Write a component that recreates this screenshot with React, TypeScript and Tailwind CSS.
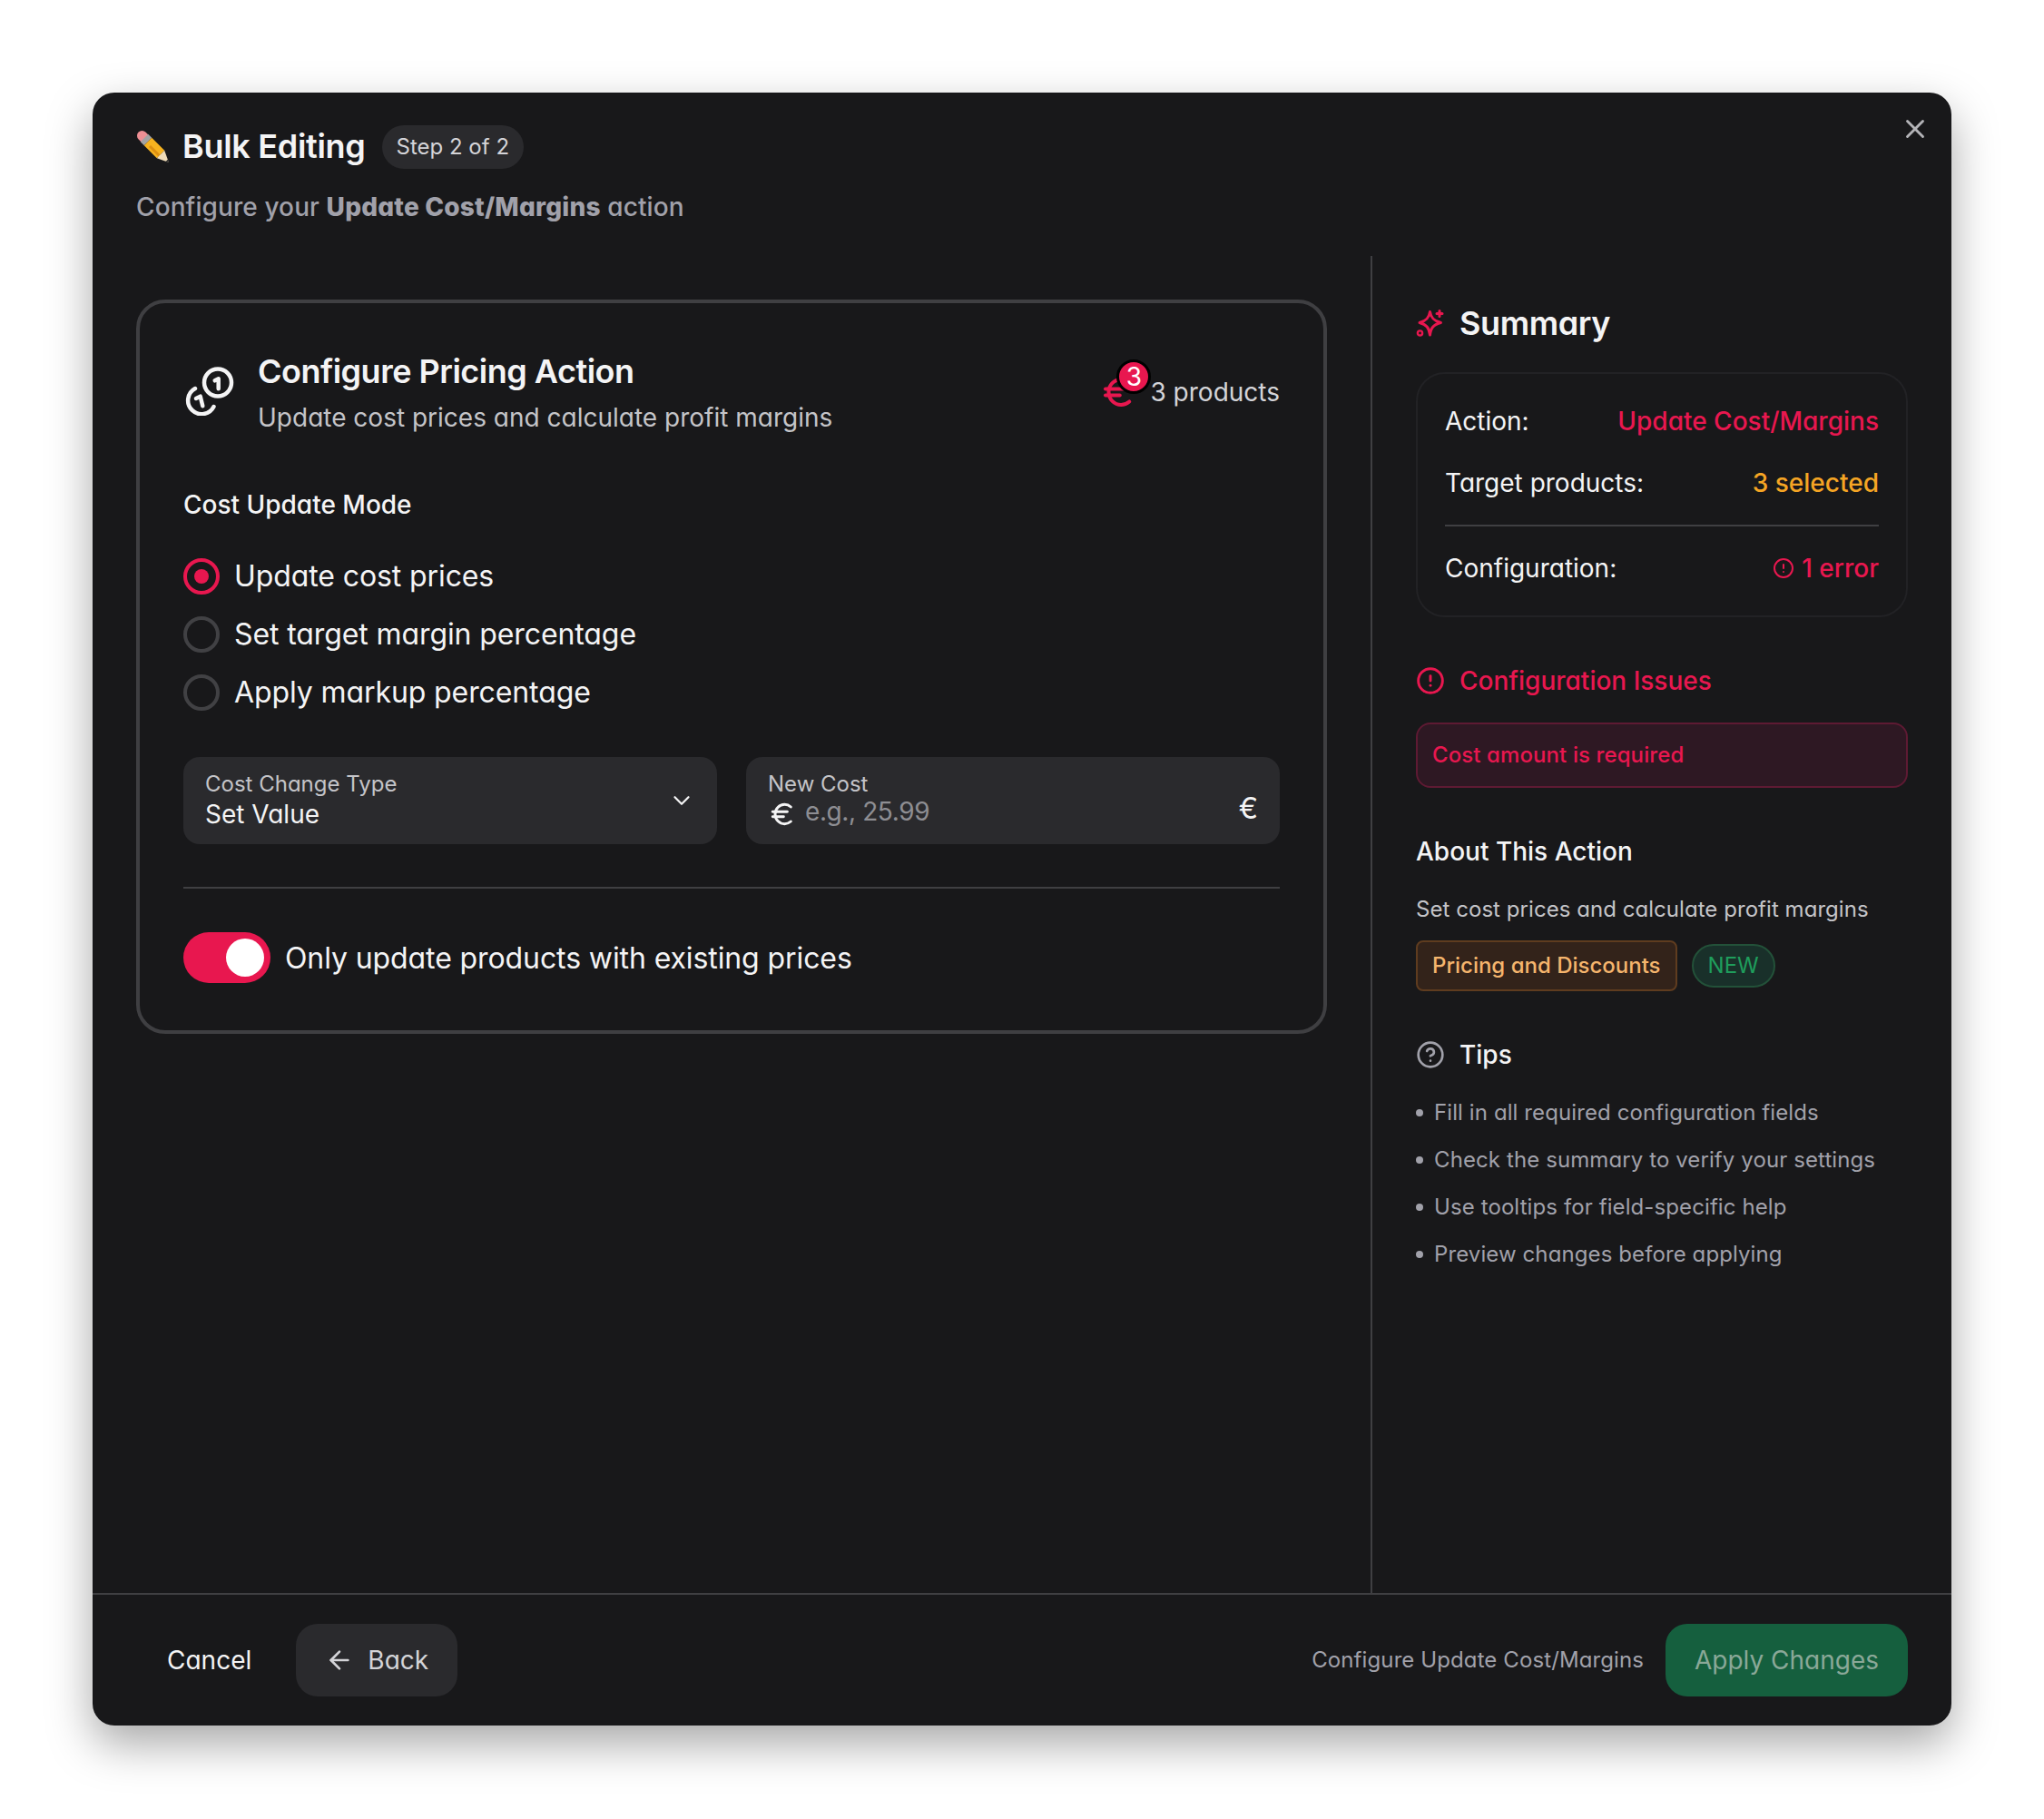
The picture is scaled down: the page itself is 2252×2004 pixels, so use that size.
import React from "react";
import { X, ChevronDown, ArrowLeft, Euro, CircleAlert, CircleHelp } from "lucide-react";

const Coins = () => (
  <svg width="60" height="60" viewBox="12 8 60 60" fill="none" stroke="#f4f4f5" strokeWidth="4.500" strokeLinecap="round" strokeLinejoin="round">
    <circle cx="50" cy="31.500" r="15" />
    <path d="M46.700 29.300l4-2v11" />
    <path d="M25 38a15 15 0 1 0 20.500 20" />
    <path d="M26 49l4.700-2.300 2.600 10.600" />
  </svg>
);

const Sparkle = () => (
  <svg width="32" height="32" viewBox="0 0 32 32" fill="none" stroke="#e8174f" strokeWidth="3" strokeLinecap="round" strokeLinejoin="round">
    <path d="M15.500 3.500C16.500 10 19.500 13.500 27.500 15.500 19.500 17.500 16.500 21 15.500 29 14.500 21 11.500 17.500 4 15.500 11.500 13.500 14.500 10 15.500 3.500Z" />
    <path d="M26 2.500v6M23 5.500h6" />
    <circle cx="4.500" cy="27" r="2.600" strokeWidth="2.400" />
  </svg>
);

const Pencil = () => (
  <svg width="38" height="38" viewBox="0 0 38 38" fill="none">
    <line x1="6.500" y1="6.500" x2="9" y2="9" stroke="#ee8f94" strokeWidth="11" strokeLinecap="round" />
    <line x1="9" y1="9" x2="13" y2="13" stroke="#a3a3a3" strokeWidth="12" />
    <line x1="13" y1="13" x2="27" y2="27" stroke="#f6b21f" strokeWidth="12" />
    <line x1="15" y1="18" x2="26" y2="29" stroke="#dc8f12" strokeWidth="3" />
    <path d="M22.800 31.200L31.200 22.800 36 36z" fill="#f0dcb8" />
    <path d="M32.500 35.100L35.100 32.500 36 36z" fill="#2b2b2b" />
  </svg>
);

const Radio = ({ on, label }: { on?: boolean; label: string }) => (
  <div className="flex items-center h-[40px] gap-[16px]">
    <div className={`w-[40px] h-[40px] rounded-full border-[4px] flex items-center justify-center ${on ? "border-[#e8174f]" : "border-[#414144]"}`}>
      {on && <div className="w-[16px] h-[16px] rounded-full bg-[#e8174f]" />}
    </div>
    <span className="text-[32px] tracking-[-0.1px] leading-[40px] text-[#f4f4f5]">{label}</span>
  </div>
);

const Row = ({ label, children }: { label: string; children: React.ReactNode }) => (
  <div className="flex items-center justify-between h-[40px]">
    <span className="text-[28px] text-[#f4f4f5]">{label}</span>
    {children}
  </div>
);

const tips = [
  "Fill in all required configuration fields",
  "Check the summary to verify your settings",
  "Use tooltips for field-specific help",
  "Preview changes before applying",
];

export default function App() {
  return (
    <div className="bg-white w-[2252px] h-[2004px] pt-[102px] pl-[102px] [font-family:Inter,'Noto_Sans',sans-serif] [font-feature-settings:'cv11']">
      <div className="relative w-[2048px] h-[1799px] rounded-[24px] bg-[#18181a] shadow-[0_20px_50px_rgba(0,0,0,0.35)] flex flex-col overflow-hidden">
        <X className="absolute top-[23px] right-[23px] text-[#b4b4b8]" size={34} strokeWidth={2} />

        <header className="h-[180px] pl-[48px] pt-[36px] shrink-0">
          <div className="flex items-center h-[48px]">
            <Pencil />
            <span className="ml-[13px] mb-[2px] text-[36px] tracking-[-0.3px] font-semibold text-[#f4f4f5]">Bulk Editing</span>
            <span className="ml-[18px] h-[48px] px-[16px] rounded-full bg-[#2a2a2d] flex items-center text-[24px] text-[#d4d4d8]">Step 2 of 2</span>
          </div>
          <p className="mt-[22px] text-[28px] tracking-[0.1px] leading-[40px] font-medium text-[#a1a1aa]">
            Configure your <b className="font-extrabold tracking-[0.2px]">Update Cost/Margins</b> action
          </p>
        </header>

        <div className="flex flex-1 min-h-0">
          <main className="w-[1408px] shrink-0 pl-[48px] pr-[48px] pt-[48px]">
            <section className="h-[809px] rounded-[32px] border-[4px] border-[#3f3f42] pt-[48px] px-[48px]">
              <div className="flex items-start">
                <div className="w-[82px] pt-[16px]">
                  <Coins />
                </div>
                <div className="pt-[3px]">
                  <h2 className="text-[36px] tracking-[-0.5px] leading-[48px] font-semibold text-[#f4f4f5]">Configure Pricing Action</h2>
                  <p className="mt-[4px] text-[28px] leading-[46px] text-[#c4c4c8]">Update cost prices and calculate profit margins</p>
                </div>
                <div className="ml-auto flex items-center gap-[10px] mt-[30px]">
                  <div className="relative w-[48px] h-[40px]">
                    <Euro className="absolute left-[2px] top-[-1px] text-[#e8174f]" size={42} strokeWidth={2.3} />
                    <div className="absolute top-[-16px] left-[21px] w-[38px] h-[38px] rounded-full bg-[#e8174f] border-[3px] border-black flex items-center justify-center text-[28px] text-white">3</div>
                  </div>
                  <span className="text-[28px] leading-[40px] text-[#d4d4d8]">3 products</span>
                </div>
              </div>

              <h3 className="mt-[53px] text-[28px] leading-[40px] font-medium text-[#f4f4f5]">Cost Update Mode</h3>

              <div className="mt-[39px] flex flex-col gap-[24px]">
                <Radio on label="Update cost prices" />
                <Radio label="Set target margin percentage" />
                <Radio label="Apply markup percentage" />
              </div>

              <div className="mt-[51px] grid grid-cols-2 gap-[32px]">
                <div className="relative h-[96px] rounded-[18px] bg-[#2a2a2d] pl-[24px] pt-[14px]">
                  <div className="text-[24px] leading-[32px] text-[#c4c4c8]">Cost Change Type</div>
                  <div className="text-[28px] leading-[34px] text-[#f4f4f5]">Set Value</div>
                  <ChevronDown className="absolute right-[24px] top-[33px] text-[#f4f4f5]" size={30} strokeWidth={1.8} />
                </div>
                <div className="relative h-[96px] rounded-[18px] bg-[#2a2a2d] pl-[24px] pt-[14px]">
                  <div className="text-[24px] leading-[32px] text-[#c4c4c8]">New Cost</div>
                  <div className="flex items-center h-[28px]">
                    <Euro className="text-[#f4f4f5] mt-[6px] shrink-0" size={32} strokeWidth={2.2} />
                    <span className="ml-[9px] text-[28px] tracking-[-0.4px] leading-[28px] text-[#8e8e93]">e.g., 25.99</span>
                  </div>
                  <span className="absolute right-[24px] top-[37px] text-[32px] leading-[40px] text-[#f4f4f5]">€</span>
                </div>
              </div>

              <div className="mt-[47px] h-[2px] bg-[#3f3f42]" />

              <div className="mt-[48px] flex items-center gap-[16px]">
                <div className="relative w-[96px] h-[56px] rounded-full bg-[#e8174f] shrink-0">
                  <div className="absolute right-[7px] top-[7px] w-[42px] h-[42px] rounded-full bg-white" />
                </div>
                <span className="pt-[2px] text-[32px] tracking-[-0.1px] text-[#f4f4f5]">Only update products with existing prices</span>
              </div>
            </section>
          </main>

          <aside className="flex-1 border-l-[2px] border-[#3f3f42] pl-[48px] pr-[48px] pt-[46px]">
            <div className="flex items-center h-[56px] gap-[16px]">
              <Sparkle />
              <span className="text-[36px] tracking-[-0.4px] font-semibold text-[#f4f4f5]">Summary</span>
            </div>

            <div className="mt-[26px] h-[270px] rounded-[32px] border-[2px] border-[#222225] px-[30px] pt-[32px]">
              <Row label="Action:">
                <span className="text-[28px] font-medium text-[#e8174f]">Update Cost/Margins</span>
              </Row>
              <div className="mt-[28px]">
                <Row label="Target products:">
                  <span className="text-[28px] font-medium text-[#f5a524]">3 selected</span>
                </Row>
              </div>
              <div className="mt-[26px] h-[2px] bg-[#3f3f42]" />
              <div className="mt-[26px]">
                <Row label="Configuration:">
                  <span className="flex items-center gap-[8px] text-[28px] font-medium text-[#e8174f]">
                    <CircleAlert size={24} strokeWidth={2} />1 error
                  </span>
                </Row>
              </div>
            </div>

            <div className="mt-[50px] flex items-center h-[40px] gap-[16px]">
              <CircleAlert className="text-[#e8174f]" size={32} strokeWidth={2.2} />
              <span className="text-[28px] font-medium text-[#e8174f]">Configuration Issues</span>
            </div>

            <div className="mt-[26px] h-[72px] rounded-[16px] bg-[#2e1823] border-[2px] border-[#5e1a33] pl-[16px] flex items-center text-[24px] tracking-[0.1px] font-medium text-[#e8174f]">
              Cost amount is required
            </div>

            <h3 className="mt-[50px] text-[28px] leading-[40px] font-medium text-[#f4f4f5]">About This Action</h3>
            <p className="mt-[24px] text-[24px] tracking-[0.05px] leading-[40px] text-[#c4c4c8]">Set cost prices and calculate profit margins</p>

            <div className="mt-[14px] flex items-center gap-[16px]">
              <span className="h-[56px] px-[16px] rounded-[8px] bg-[#33231a] border-[2px] border-[#5f3c1f] flex items-center text-[24px] font-medium text-[#f5b56d]">Pricing and Discounts</span>
              <span className="h-[48px] px-[16px] rounded-full bg-[#19302a] border-[2px] border-[#235139] flex items-center text-[24px] text-[#1f9d5c]">NEW</span>
            </div>

            <div className="mt-[50px] flex items-center h-[40px] gap-[16px]">
              <CircleHelp className="text-[#a1a1aa]" size={32} strokeWidth={2} />
              <span className="text-[28px] font-medium text-[#f4f4f5]">Tips</span>
            </div>

            <ul className="mt-[24px] flex flex-col gap-[12px]">
              {tips.map((t) => (
                <li key={t} className="flex items-center h-[40px] text-[24px] tracking-[0.1px] text-[#a1a1aa]">
                  <span className="w-[8px] h-[8px] rounded-full bg-[#a1a1aa] mr-[12px]" />
                  {t}
                </li>
              ))}
            </ul>
          </aside>
        </div>

        <footer className="h-[146px] shrink-0 border-t-[2px] border-[#3f3f42] flex items-center pl-[48px] pr-[48px] pb-[1px]">
          <button className="h-[80px] px-[34px] text-[28px] text-[#f4f4f5]">Cancel</button>
          <button className="ml-[15px] h-[80px] w-[178px] rounded-[24px] bg-[#2a2a2d] flex items-center justify-center gap-[15px] text-[28px] text-[#d4d4d8]">
            <ArrowLeft size={32} strokeWidth={2} />
            Back
          </button>
          <span className="ml-auto text-[24px] tracking-[0.1px] text-[#a1a1aa]">Configure Update Cost/Margins</span>
          <button className="ml-[24px] h-[80px] w-[267px] rounded-[24px] bg-[#155f3e] text-[28px] text-[#8aa898]">Apply Changes</button>
        </footer>
      </div>
    </div>
  );
}
